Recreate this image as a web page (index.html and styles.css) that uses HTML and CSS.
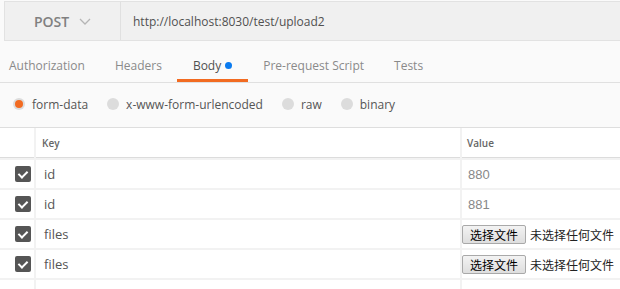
FILE: index.html
```html
<!DOCTYPE html>
<html lang="en">
<head>
  <meta charset="UTF-8">
  <title>POST upload2</title>
  <link rel="stylesheet" href="styles.css">
</head>
<body>
  <!-- 请求地址栏 -->
  <div class="request-bar">
    <div class="method">
      POST
      <svg class="chevron" width="12" height="7" viewBox="0 0 12 7">
        <path d="M1 1 L6 6 L11 1" fill="none" stroke="#b5b5b5" stroke-width="1.3"/>
      </svg>
    </div>
    <div class="url">http://localhost:8030/test/upload2</div>
  </div>

  <!-- 选项卡 -->
  <div class="tabs">
    <div class="tab">Authorization</div>
    <div class="tab">Headers</div>
    <div class="tab active">Body <span class="dot"></span></div>
    <div class="tab">Pre-request Script</div>
    <div class="tab">Tests</div>
  </div>

  <!-- body 类型 -->
  <div class="body-types">
    <label class="radio-item"><span class="radio checked"></span>form-data</label>
    <label class="radio-item"><span class="radio"></span>x-www-form-urlencoded</label>
    <label class="radio-item"><span class="radio"></span>raw</label>
    <label class="radio-item"><span class="radio"></span>binary</label>
  </div>

  <!-- 参数表 -->
  <div class="params">
    <div class="cell head"></div>
    <div class="cell head key">Key</div>
    <div class="cell head value">Value</div>

    <div class="cell check"><span class="checkbox"></span></div>
    <div class="cell key">id</div>
    <div class="cell value"><span class="value-text">880</span></div>

    <div class="cell check"><span class="checkbox"></span></div>
    <div class="cell key">id</div>
    <div class="cell value"><span class="value-text">881</span></div>

    <div class="cell check"><span class="checkbox"></span></div>
    <div class="cell key">files</div>
    <div class="cell value"><span class="file-btn">选择文件</span><span class="file-name">未选择任何文件</span></div>

    <div class="cell check"><span class="checkbox"></span></div>
    <div class="cell key">files</div>
    <div class="cell value"><span class="file-btn">选择文件</span><span class="file-name">未选择任何文件</span></div>

    <div class="cell check"></div>
    <div class="cell key"></div>
    <div class="cell value"></div>
  </div>
</body>
</html>
```

FILE: styles.css
```css
body {
  margin: 0;
  font-family: "Open Sans", "Noto Sans", sans-serif;
  background: #fafafa;
  color: #555;
  overflow: hidden;
}

/* 地址栏 */
.request-bar {
  display: flex;
  height: 38px;
  margin: 1px 0 0 4px;
  background: #f0f0f0;
  border: 1px solid #e2e2e2;
  border-right: none;
}
.method {
  width: 115px;
  display: flex;
  align-items: center;
  justify-content: center;
  gap: 10px;
  font-size: 14px;
  font-weight: 600;
  color: #808080;
  border-right: 1px solid #e0e0e0;
}
.chevron {
  margin-top: 1px;
}
.url {
  display: flex;
  align-items: center;
  padding-left: 12px;
  font-size: 12px;
  color: #505050;
}

/* 选项卡 */
.tabs {
  display: flex;
  height: 41px;
  border-bottom: 1px solid #e0e0e0;
}
.tab {
  display: flex;
  align-items: center;
  gap: 4px;
  padding: 10px 15px 0;
  font-size: 12px;
  color: #8a8a8a;
  border-bottom: 3px solid transparent;
}
.tab:first-child {
  padding-left: 9px;
}
.tab.active {
  color: #505050;
  padding: 10px 16px 0;
  border-bottom-color: #f26b21;
}
.dot {
  width: 7px;
  height: 7px;
  border-radius: 50%;
  background: #0a7bf0;
}

/* body 类型 */
.body-types {
  display: flex;
  align-items: center;
  height: 42px;
  padding: 0 0 2px 13px;
  gap: 19px;
  font-size: 12px;
  color: #555;
}
.radio-item {
  display: flex;
  align-items: center;
  gap: 7px;
}
.radio {
  width: 12px;
  height: 12px;
  border-radius: 50%;
  background: #dcdcdc;
  display: flex;
  align-items: center;
  justify-content: center;
}
.radio.checked::after {
  content: "";
  width: 8px;
  height: 8px;
  border-radius: 50%;
  background: #f26b21;
}

/* 参数表 */
.params {
  display: grid;
  grid-template-columns: 34px 1fr 158px;
  grid-template-rows: 30px;
  grid-auto-rows: 28px;
  gap: 2px;
  background: #f2f2f2;
  border-top: 1px solid #dedede;
}
.cell {
  background: #fff;
  display: flex;
  align-items: center;
  font-size: 13px;
  color: #555;
}
.cell.head {
  font-size: 10px;
  font-weight: 600;
  color: #666;
  border-bottom: 1px solid #dcdcdc;
}
.cell.key {
  padding-left: 8px;
}
.cell.head.key {
  padding-left: 6px;
}
.cell.head.value {
  padding-left: 5px;
}
.check {
  justify-content: flex-end;
  padding-right: 3px;
}
.checkbox {
  width: 16px;
  height: 16px;
  border-radius: 2px;
  background: #555;
  position: relative;
}
.checkbox::after {
  content: "";
  position: absolute;
  left: 5px;
  top: 3px;
  width: 4px;
  height: 7px;
  border: solid #fff;
  border-width: 0 2px 2px 0;
  transform: rotate(45deg);
}
.value-text {
  padding-left: 6px;
  font-family: "Liberation Sans", Arial, sans-serif;
  color: #888;
}
.file-btn {
  font-family: "Noto Sans CJK SC", sans-serif;
  font-size: 12px;
  line-height: 17px;
  color: #000;
  padding: 0 7px;
  border: 1px solid #a9a9a9;
  border-radius: 2px;
  background: linear-gradient(#f3f3f3, #dedede);
}
.file-name {
  font-family: "Noto Sans CJK SC", sans-serif;
  font-size: 12px;
  color: #222;
  margin-left: 4px;
}
```
